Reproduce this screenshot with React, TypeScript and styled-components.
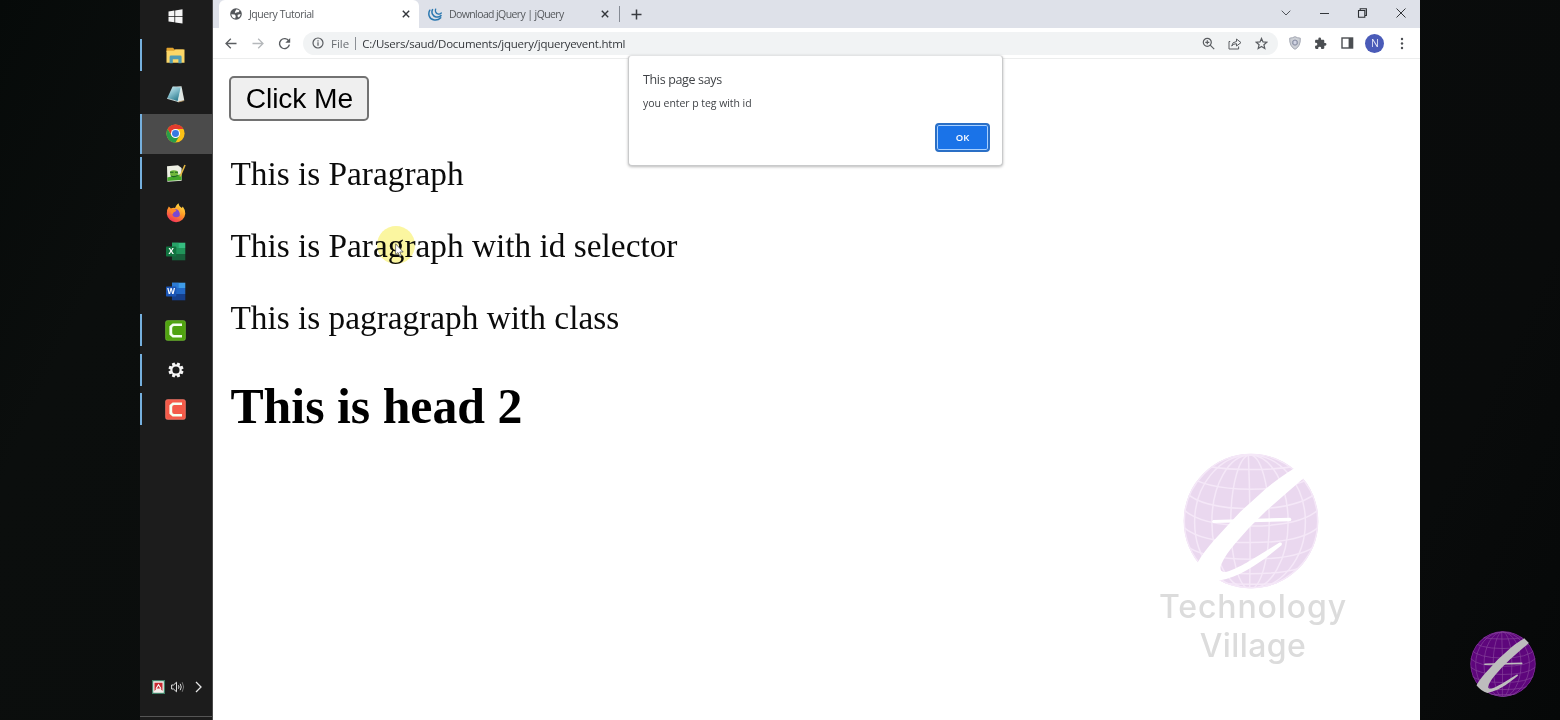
import React from 'react';
import styled, { createGlobalStyle } from 'styled-components';

const Global = createGlobalStyle`
  * { box-sizing: border-box; }
  html, body { margin: 0; padding: 0; background: #090c0b; overflow: hidden; }
  svg { display: block; flex: none; }
`;

const ui = '"Open Sans", "Noto Sans", sans-serif';

const Screen = styled.div`
  position: relative;
  width: 1560px;
  height: 720px;
  display: flex;
  justify-content: center;
  overflow: hidden;
  background: linear-gradient(115deg, #060a09, #0b0e0d 12%, #090b0b 88%, #060808);
`;
const Desktop = styled.div`
  width: 1280px;
  height: 720px;
  display: flex;
`;
const Taskbar = styled.nav`
  width: 73px;
  height: 720px;
  background: #1c1c1c;
  border-right: 1px solid #4a4a4a;
  display: flex;
  flex-direction: column;
  justify-content: space-between;
`;
const TaskList = styled.div`
  display: flex;
  flex-direction: column;
  margin-top: -3.6px;
`;
const TaskItem = styled.div<{ $open?: boolean; $active?: boolean }>`
  height: 39.3px;
  display: flex;
  align-items: center;
  background: ${p => (p.$active ? '#4b4b4b' : 'transparent')};
  &::before {
    content: '';
    width: 2px;
    height: ${p => (p.$active ? '39.3px' : '32px')};
    background: ${p => (p.$open ? '#76b0de' : 'transparent')};
  }
`;
const TaskIcon = styled.div`
  flex: 1;
  display: flex;
  justify-content: center;
  padding-right: 3px;
`;
const Tray = styled.div`
  display: flex;
  align-items: center;
  height: 60px;
  padding-left: 12px;
  gap: 6px;
  border-bottom: 1px solid #555;
  margin-bottom: 3px;
  svg:last-child { margin-left: 4px; }
`;
const Browser = styled.main`
  flex: 1;
  height: 720px;
  display: flex;
  flex-direction: column;
  background: #fff;
`;
const TabStrip = styled.div`
  height: 28px;
  background: #dee1e9;
  display: flex;
  align-items: stretch;
  padding-left: 6px;
`;
const Tab = styled.div<{ $active?: boolean; $w: number }>`
  width: ${p => p.$w}px;
  display: flex;
  align-items: center;
  padding: 0 9px 0 ${p => (p.$active ? 11 : 9)}px;
  background: ${p => (p.$active ? '#fff' : 'transparent')};
  border-radius: 6px 6px 0 0;
`;
const TabTitle = styled.span<{ $sp: number }>`
  font: 10.5px/28px ${ui};
  letter-spacing: ${p => p.$sp}px;
  color: #55585c;
  margin-left: 7px;
  flex: 1;
  white-space: nowrap;
`;
const TabDivider = styled.div`
  width: 1px;
  height: 16px;
  margin: 6px 12px 0 1px;
  background: #858a94;
`;
const NewTab = styled.div`
  display: flex;
  align-items: center;
  margin-left: -1px;
`;
const WindowControls = styled.div`
  margin-left: auto;
  display: flex;
  align-items: center;
  gap: 27.2px;
  padding: 0 13px 3px 0;
`;
const Toolbar = styled.div`
  height: 31px;
  display: flex;
  align-items: center;
  padding: 0 12px 0 11px;
  border-bottom: 1px solid #eceded;
`;
const NavButtons = styled.div`
  display: flex;
  gap: 13px;
  width: 79px;
`;
const Omnibox = styled.div`
  width: 975px;
  height: 23px;
  border-radius: 12px;
  background: #f1f3f4;
  display: flex;
  align-items: center;
  padding: 0 10px 0 9px;
`;
const Scheme = styled.span`
  font: 11.5px/23px ${ui};
  color: #6a6e73;
  margin-left: 7px;
`;
const SchemeDivider = styled.i`
  width: 1px;
  height: 13px;
  background: #8b8f94;
  margin: 0 6px 0 6px;
`;
const Url = styled.span`
  font: 11.5px/23px ${ui};
  letter-spacing: -0.25px;
  color: #35383c;
  flex: 1;
  white-space: nowrap;
`;
const OmniActions = styled.div`
  display: flex;
  gap: 13px;
`;
const Extensions = styled.div`
  margin-left: auto;
  display: flex;
  align-items: center;
  gap: 13.6px;
`;
const Avatar = styled.div`
  width: 19px;
  height: 19px;
  border-radius: 50%;
  margin: 0 -2px;
  background: #4a5bb8;
  color: #e8eaf8;
  font: 10.5px/19px ${ui};
  text-align: center;
`;
const Page = styled.section`
  flex: 1;
  padding: 17px 17px 0;
  font-family: "Liberation Serif", serif;
  color: #0b0b0b;
`;
const PageButton = styled.button`
  display: block;
  width: 140px;
  height: 45px;
  margin-left: -0.6px;
  padding: 0 0 2px;
  border: 2px solid #727272;
  border-radius: 5px;
  background: #efefef;
  color: #000;
  font: 28.2px/38px "Liberation Sans", sans-serif;
  letter-spacing: -0.1px;
`;
const Paragraph = styled.p`
  margin: 0 0 34px;
  padding-left: 0.4px;
  font-size: 33.35px;
  line-height: 38px;
  white-space: nowrap;
  &:first-of-type { margin-top: 34px; }
`;
const Heading = styled.h2`
  margin: 41px 0 0;
  padding-left: 0.4px;
  font-size: 49.8px;
  line-height: 58px;
  color: #000;
`;
const Dialog = styled.div`
  position: absolute;
  left: 628px;
  top: 55px;
  width: 375px;
  height: 111px;
  padding: 15px 13px 13px 14px;
  display: flex;
  flex-direction: column;
  background: #fff;
  border: 1px solid #c9cacb;
  border-top-color: #e3e4e5;
  border-radius: 4px;
  box-shadow: 0 1px 3px rgba(0, 0, 0, 0.28);
  font-family: ${ui};
  color: #404347;
`;
const DialogTitle = styled.div`
  font-size: 12.5px;
  line-height: 18px;
  letter-spacing: -0.35px;
`;
const DialogText = styled.div`
  font-size: 10.5px;
  line-height: 16px;
  margin-top: 6px;
  letter-spacing: -0.05px;
`;
const OkButton = styled.button`
  align-self: flex-end;
  margin: auto -1px 0 0;
  width: 55px;
  height: 29px;
  padding: 0;
  border: 2px solid #2a6fc6;
  border-radius: 4px;
  background: #1a73e8;
  box-shadow: inset 0 0 0 1px #a8d0ff;
  color: #fff;
  font: 600 9.5px/24px ${ui};
`;
const Halo = styled.div`
  position: absolute;
  left: 377px;
  top: 226px;
  width: 38px;
  height: 38px;
  border-radius: 50%;
  background: #fbf6a0;
  mix-blend-mode: multiply;
`;
const Pointer = styled.div`
  position: absolute;
  left: 395px;
  top: 243px;
`;
const Watermark = styled.div`
  position: absolute;
  left: 1130px;
  top: 453px;
  width: 246px;
  display: flex;
  flex-direction: column;
  align-items: center;
  font: 500 32px/39px Inter, sans-serif;
  color: #dcdcdc;
  > svg { margin: 0 5px -2px 0; }
`;
const MarkLine = styled.div<{ $sp: number }>`
  letter-spacing: ${p => p.$sp}px;
`;
const Badge = styled.div`
  position: absolute;
  left: 1470px;
  top: 630.5px;
`;

function GlobeLogo({ size, fill, grid, mark }: { size: number; fill: string; grid: string; mark: string }) {
  const id = `globe${size}`;
  const parallels = [[88, 51], [147, 94], [206, 151], [258, 208], [308, 261], [358, 311], [402, 356], [434, 401]];
  return (
    <svg width={size} height={size} viewBox="127 38 410 410">
      <defs><clipPath id={id}><circle cx="332" cy="243" r="203" /></clipPath></defs>
      <circle cx="332" cy="243" r="203" fill={fill} />
      <g clipPath={`url(#${id})`} fill="none" stroke={grid} strokeWidth="4.5">
        <circle cx="332" cy="243" r="201" />
        <path d="M324 40Q332 240 328 446" />
        {[58, 115, 167].map(r => <ellipse key={r} cx="329" cy="246" rx={r} ry="202" />)}
        {parallels.map(([c, e]) => <path key={c} d={`M128 ${e}Q180 ${c} 332 ${c}Q484 ${c} 536 ${e}`} />)}
      </g>
      <g transform="translate(120 30)" fill={mark}>
        <path d="M344 53C306 76 268 104 235 135L180 185L140 228L100 272C82 292 64 316 50 340L48 346C64 366 88 384 115 393C145 388 175 375 200 361C240 338 275 310 304 286Q308 276 298 278L230 320C205 335 190 344 175 351C158 359 142 368 130 367C118 365 118 352 124 340C132 322 147 301 165 280L205 235L255 185L320 128L373 82Z" />
        <path d="M98 210L330 203Q337 208 330 214L98 219Q91 214 98 210Z" />
      </g>
    </svg>
  );
}

const stroke = { fill: 'none', stroke: '#5a5d61', strokeWidth: 1.2 } as const;

const WindowsIcon = () => (
  <svg width="15" height="15" viewBox="0 0 15 15" fill="#f4f4f4">
    <path d="M0.5 2.4L6.4 1.5V7H.5ZM7.2 1.4L14.5.3V7H7.2ZM.5 7.8H6.4V13.2L.5 12.4ZM7.2 7.8H14.5V14.6L7.2 13.4Z" />
  </svg>
);
const FolderIcon = () => (
  <svg width="19" height="17" viewBox="0 0 19 17">
    <path fill="#e1a22e" d="M.5 1.5Q.5.8 1.2.8H7L8.6 2.4H17.5V5H.5Z" />
    <path fill="#fbd667" d="M.5 3.8H8L9.5 2.4H18.5V15.8H.5Z" />
    <path fill="#4f9bb4" d="M3.6 16.2V10Q3.6 8.6 5 8.6H14.2Q15.6 8.6 15.6 10V16.2H12.4V12.2H6.8V16.2Z" />
  </svg>
);
const NotepadIcon = () => (
  <svg width="19" height="19" viewBox="0 0 19 19">
    <defs><linearGradient id="pad" x1="0" x2=".6" y1="0" y2="1"><stop stopColor="#d9f0f3" /><stop offset=".5" stopColor="#83bdcb" /><stop offset="1" stopColor="#2f7d90" /></linearGradient></defs>
    <path fill="#dfe5e2" d="M7 1.8L15.5 1.3L18.3 15.6L12 17.2Z" />
    <path fill="url(#pad)" d="M6.6 1.6L15 2.6L12 16.2L1.2 13.2Z" />
    <path stroke="#dff2f2" fill="none" strokeWidth=".8" d="M1.2 13.4L12 16.5L15 3" />
    <path stroke="#b3905a" strokeWidth=".8" d="M12.4 17L18 15.6" />
  </svg>
);
const ChromeIcon = () => (
  <svg width="19" height="19" viewBox="0 0 48 48">
    <circle cx="24" cy="24" r="23" fill="#fbc116" />
    <path fill="#e33b2e" d="M4.1 12.5A23 23 0 0 1 43.9 12.5H24L14 29.7Z" />
    <path fill="#299d49" d="M4.1 12.5A23 23 0 0 0 24 47L34 29.7L24 35.5L14 29.7Z" />
    <circle cx="24" cy="24" r="11.5" fill="#fff" />
    <circle cx="24" cy="24" r="8.8" fill="#3879e0" />
  </svg>
);
const NotepadPlusIcon = () => (
  <svg width="20" height="19" viewBox="0 0 20 19">
    <path fill="#eef0e4" d="M1 2.2L12 1.2L15.6 4V16.8L1.4 17.8Z" />
    <path fill="#45a82c" d="M1.3 13.5L15.6 10V16L1.4 17Z" />
    <path fill="#71b83d" d="M4 7.6Q7 5 11.4 7L12.4 10.3Q8 13.8 4.3 11.4Z" />
    <path fill="none" stroke="#1e6425" strokeWidth="1.1" d="M4 8.2H7.5M9 8.2H12M5 12Q8.5 13.4 11.6 11.4" />
    <path stroke="#e1b642" strokeWidth="1.6" d="M19 1L14 12.5" />
  </svg>
);
const FirefoxIcon = () => (
  <svg width="20" height="20" viewBox="0 0 20 20">
    <defs><linearGradient id="fox" x1=".8" y1="0" x2=".25" y2="1"><stop stopColor="#ffe44a" /><stop offset=".45" stopColor="#ff9a25" /><stop offset="1" stopColor="#f32b5c" /></linearGradient></defs>
    <path fill="url(#fox)" d="M2.8 3.6L4.9 5.6Q7 4.5 9 5Q10.2 1.8 12.4.3Q12.8 3.5 15.8 5.1L16.8 3.6Q19.5 7 19.3 10.8A9.3 9.2 0 0 1 .8 11Q.6 6.5 2.8 3.6Z" />
    <circle cx="10.3" cy="10.2" r="4" fill="#7a49d2" />
    <path fill="#ff8a27" d="M4.5 6Q8 4.8 10.6 7.7L8 9.2Q6.5 9.7 7.2 11.4Q3.8 9.7 4.5 6Z" />
    <path fill="#ffad30" d="M12.2 3.5Q16.8 8.7 13.8 12.5Q14.2 8.5 11.2 6.3Z" />
  </svg>
);
function OfficeIcon({ letter, dark, mid, light, tile }: { letter: string; dark: string; mid: string; light: string; tile: string }) {
  return (
    <svg width="20" height="19" viewBox="0 0 20 19">
      <path fill={light} d="M6 .7H19.3V6H6Z" /><path fill={mid} d="M6 6H19.3V12H6Z" />
      <path fill={dark} d="M6 12H19.3V18.3H6Z" /><path fill={mid} d="M6 .7H12.7V12H6Z" opacity=".65" />
      <rect y="4.4" width="10.3" height="10.2" rx=".8" fill={tile} />
      <text x="5.1" y="12.4" textAnchor="middle" fontFamily="Open Sans, sans-serif" fontSize="8" fontWeight="700" fill="#fff">{letter}</text>
    </svg>
  );
}
function CamtasiaIcon({ color, edge }: { color: string; edge: string }) {
  return (
    <svg width="21" height="21" viewBox="0 0 21 21">
      <rect x=".7" y=".7" width="19.6" height="19.6" rx="1.6" fill={color} stroke={edge} strokeWidth=".8" />
      <path fill="#f5fff0" d="M17 3.4V5.9H9.2Q7.2 5.9 7.2 7.9V13.1Q7.2 15.1 9.2 15.1H17V17.6H7.6L4.4 14.8V6.2L7.6 3.4Z" />
    </svg>
  );
}
const GearIcon = () => (
  <svg width="16" height="16" viewBox="0 0 16 16">
    <g fill="#f5f5f5">{[0, 45, 90, 135, 180, 225, 270, 315].map(a => <path key={a} transform={`rotate(${a + 22.5} 8 8)`} d="M6.6.4H9.4L9.8 3.5H6.2Z" />)}</g>
    <circle cx="8" cy="8" r="4.5" fill="none" stroke="#f5f5f5" strokeWidth="1.9" />
  </svg>
);
const GlobeIcon = () => (
  <svg width="12" height="12" viewBox="0 0 12 12">
    <circle cx="6" cy="6" r="5.8" fill="#53565a" />
    <path fill="#fff" d="M1.3 6.2L4.7 6.6L5.8 8L5.2 10.6Q1.6 9.8 1.3 6.2ZM6.2 1.4Q8 1.2 9.6 2.8L8.5 4.2H6.8L5.8 5.2L4.8 4.2ZM7.8 6.8L10.6 6Q10.4 8.4 8.8 9.6L7.4 8.2Z" />
  </svg>
);
const JqueryIcon = () => (
  <svg width="14" height="13" viewBox="0 0 14 13" fill="none" stroke="#2c78b0" strokeLinecap="round">
    <path strokeWidth="1.5" d="M1.8 2.2C-.3 6 1.1 11.5 6.3 12C9 12.4 11.2 11.4 12.7 9.7" />
    <path strokeWidth="1.5" d="M4.5 1.6C3 4.6 4.7 8.3 8 8.9C10 9.4 11.7 8.8 13 7.6" />
    <path strokeWidth="1.3" d="M7.7 1.1C6.8 3.2 8 5.4 10 6C11.4 6.3 12.4 6 13.3 5" />
  </svg>
);
const CloseIcon = () => (
  <svg width="8" height="8" viewBox="0 0 8 8" stroke="#33363b" strokeWidth="1.4"><path d="M.8.8L7.2 7.2M7.2.8L.8 7.2" /></svg>
);

export default function App() {
  return (
    <Screen>
      <Global />
      <Desktop>
        <Taskbar>
          <TaskList>
            <TaskItem><TaskIcon><WindowsIcon /></TaskIcon></TaskItem>
            <TaskItem $open><TaskIcon><FolderIcon /></TaskIcon></TaskItem>
            <TaskItem><TaskIcon><NotepadIcon /></TaskIcon></TaskItem>
            <TaskItem $open $active><TaskIcon><ChromeIcon /></TaskIcon></TaskItem>
            <TaskItem $open><TaskIcon><NotepadPlusIcon /></TaskIcon></TaskItem>
            <TaskItem><TaskIcon><FirefoxIcon /></TaskIcon></TaskItem>
            <TaskItem><TaskIcon><OfficeIcon letter="X" dark="#17613b" mid="#21955a" light="#36bd80" tile="#11733f" /></TaskIcon></TaskItem>
            <TaskItem><TaskIcon><OfficeIcon letter="W" dark="#153f8c" mid="#2268c6" light="#3f9ce8" tile="#1b55b5" /></TaskIcon></TaskItem>
            <TaskItem $open><TaskIcon><CamtasiaIcon color="#4fa30f" edge="#70bb34" /></TaskIcon></TaskItem>
            <TaskItem $open><TaskIcon><GearIcon /></TaskIcon></TaskItem>
            <TaskItem $open><TaskIcon><CamtasiaIcon color="#f45a48" edge="#f77a69" /></TaskIcon></TaskItem>
          </TaskList>
          <Tray>
            <svg width="13" height="14" viewBox="0 0 13 14">
              <rect x=".6" y=".6" width="11.8" height="12.8" fill="#f3efec" stroke="#3f8268" strokeWidth="1.2" />
              <path fill="#c72a31" d="M2.5 2.8H10.5V11L8.4 8.6H4.6L2.5 11Z" />
              <path fill="none" stroke="#fff" strokeWidth="1.1" d="M4 8.7L6.5 4.7L9 8.7" />
            </svg>
            <svg width="14" height="12" viewBox="0 0 14 12" fill="none" stroke="#dedede" strokeWidth="1">
              <path d="M.6 4H2.5L5.5 1.2V10.8L2.5 8H.6Z" /><path d="M7.4 4.3Q8.6 6 7.4 7.7M9.2 2.8Q11.3 6 9.2 9.2" /><path stroke="#777" d="M11.2 1.2Q14.2 6 11.2 10.8" />
            </svg>
            <svg width="7" height="12" viewBox="0 0 7 12" fill="none" stroke="#e5e5e5" strokeWidth="1.3"><path d="M1 1L6 6L1 11" /></svg>
          </Tray>
        </Taskbar>
        <Browser>
          <TabStrip>
            <Tab $active $w={200}><GlobeIcon /><TabTitle $sp={-0.45}>Jquery Tutorial</TabTitle><CloseIcon /></Tab>
            <Tab $w={199}><JqueryIcon /><TabTitle $sp={-0.6}>Download jQuery | jQuery</TabTitle><CloseIcon /></Tab>
            <TabDivider />
            <NewTab><svg width="11" height="11" viewBox="0 0 11 11" stroke="#383b40" strokeWidth="1.5"><path d="M5.5.5V10.5M.5 5.5H10.5" /></svg></NewTab>
            <WindowControls>
              <svg width="10" height="6" viewBox="0 0 10 6" fill="none" stroke="#50545a" strokeWidth="1"><path d="M.7.7L5 5L9.3.7" /></svg>
              <svg width="11" height="10" viewBox="0 0 11 10" stroke="#33363a" strokeWidth="1"><path d="M1 5.5H10" /></svg>
              <svg width="11" height="10" viewBox="0 0 11 10" fill="none" stroke="#2c2f33" strokeWidth="1.1"><path d="M1.5 2.5H7.8V9.2H1.5ZM3.2 2.5V.8H9.4V7.5H7.8" /></svg>
              <svg width="12" height="10" viewBox="0 0 12 10" stroke="#33363a" strokeWidth="1"><path d="M1.5.5L10.5 9.5M10.5.5L1.5 9.5" /></svg>
            </WindowControls>
          </TabStrip>
          <Toolbar>
            <NavButtons>
              <svg width="14" height="13" viewBox="0 0 14 13" {...stroke} strokeWidth={1.3}><path d="M12.5 6.5H2M6.8 1.7L2 6.5L6.8 11.3" /></svg>
              <svg width="14" height="13" viewBox="0 0 14 13" {...stroke} stroke="#b5b8bb" strokeWidth={1.3}><path d="M1.5 6.5H12M7.2 1.7L12 6.5L7.2 11.3" /></svg>
              <svg width="13" height="13" viewBox="0 0 13 13" {...stroke} strokeWidth={1.4}><path d="M10.8 4A5 5 0 1 0 11.4 7.7" /><path fill="#5a5d61" stroke="none" d="M12.2 .9V5.8H7.3Z" /></svg>
            </NavButtons>
            <Omnibox>
              <svg width="12" height="12" viewBox="0 0 12 12" {...stroke}><circle cx="6" cy="6" r="5" /><path d="M6 5.3V8.8M6 3.2V4.4" /></svg>
              <Scheme>File</Scheme><SchemeDivider />
              <Url>C:/Users/saud/Documents/jquery/jqueryevent.html</Url>
              <OmniActions>
                <svg width="13" height="13" viewBox="0 0 13 13" {...stroke}><circle cx="5.3" cy="5.3" r="4" /><path d="M8.2 8.2L12.2 12.2M3.3 5.3H7.3M5.3 3.3V7.3" /></svg>
                <svg width="14" height="13" viewBox="0 0 14 13" {...stroke} strokeWidth={1}><path d="M2.2 4.5H1V12H10.6V9.5M3.7 9Q4.1 4.8 8.5 4.5V2L13 5.6L8.5 9V6.7Q5.5 6.6 3.7 9Z" /></svg>
                <svg width="13" height="13" viewBox="0 0 13 13" {...stroke}><path d="M6.5 1.4L8 4.9L11.8 5.2L8.9 7.7L9.8 11.4L6.5 9.4L3.2 11.4L4.1 7.7L1.2 5.2L5 4.9Z" /></svg>
              </OmniActions>
            </Omnibox>
            <Extensions>
              <svg width="12" height="14" viewBox="0 0 12 14"><path fill="#cdd0d6" stroke="#a2a6b1" d="M6 .7Q8.5 2 11.3 2.2Q11.6 10.5 6 13.3Q.4 10.5.7 2.2Q3.5 2 6 .7Z" /><circle cx="6" cy="6.6" r="2.6" fill="#b2b7c7" stroke="#8d93a8" /><path stroke="#eef" d="M6 5V8" /></svg>
              <svg width="13" height="13" viewBox="0 0 24 24" fill="#4b4e52"><path d="M20.5 11H19V7c0-1.1-.9-2-2-2h-4V3.5a2.5 2.5 0 0 0-5 0V5H4c-1.1 0-2 .9-2 2v3.8h1.5a2.7 2.7 0 0 1 0 5.4H2V20c0 1.1.9 2 2 2h3.8v-1.5a2.7 2.7 0 0 1 5.4 0V22H17c1.1 0 2-.9 2-2v-4h1.5a2.5 2.5 0 0 0 0-5z" /></svg>
              <svg width="13" height="12" viewBox="0 0 13 12"><rect x="1" y="1" width="10.6" height="10" fill="#fff" stroke="#4b4e52" strokeWidth="1.4" /><path fill="#4b4e52" d="M7.6 1H12V11H7.6Z" /></svg>
              <Avatar>N</Avatar>
              <svg width="12" height="13" viewBox="0 0 12 13" fill="#4b4e52"><circle cx="6" cy="2" r="1.2" /><circle cx="6" cy="6.5" r="1.2" /><circle cx="6" cy="11" r="1.2" /></svg>
            </Extensions>
          </Toolbar>
          <Page>
            <PageButton>Click Me</PageButton>
            <Paragraph>This is Paragraph</Paragraph>
            <Paragraph>This is Paragraph with id selector</Paragraph>
            <Paragraph>This is pagragraph with class</Paragraph>
            <Heading>This is head 2</Heading>
          </Page>
        </Browser>
      </Desktop>
      <Dialog>
        <DialogTitle>This page says</DialogTitle>
        <DialogText>you enter p teg with id</DialogText>
        <OkButton>OK</OkButton>
      </Dialog>
      <Halo />
      <Pointer>
        <svg width="9" height="15" viewBox="0 0 9 15"><path fill="#fff" stroke="#555" strokeWidth=".8" d="M.6.8V11.6L3 9.5L4.8 13.4L6.4 12.7L4.8 9H8.2Z" /></svg>
      </Pointer>
      <Watermark>
        <GlobeLogo size={136} fill="#ead8ef" grid="#f5e8f8" mark="#ffffff" />
        <MarkLine $sp={0.9}>Technology</MarkLine>
        <MarkLine $sp={0.4}>Village</MarkLine>
      </Watermark>
      <Badge><GlobeLogo size={66} fill="#5e067c" grid="#844198" mark="#bdbdbd" /></Badge>
    </Screen>
  );
}
